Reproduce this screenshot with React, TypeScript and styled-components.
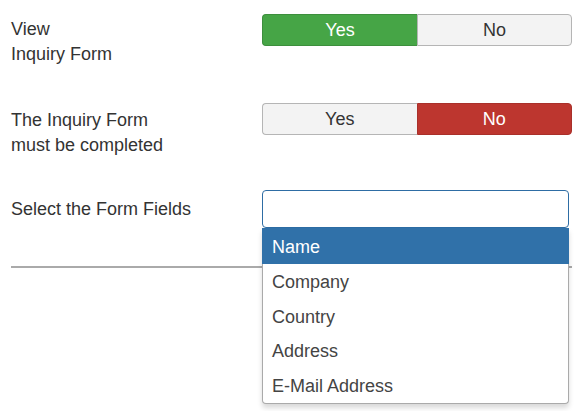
import React from "react";
import styled, { createGlobalStyle } from "styled-components";

const Global = createGlobalStyle`
  html, body { margin: 0; padding: 0; background: #fff; }
  body {
    font-family: "Liberation Sans", Arial, sans-serif;
    font-size: 18px;
    line-height: 25px;
    color: #333;
  }
`;

const Page = styled.div`
  position: relative;
  box-sizing: border-box;
  min-height: 411px;
  padding: 14px 0 0 11px;
  width: 587px;
`;

const Row = styled.div<{ $h: number }>`
  display: grid;
  grid-template-columns: 251px 310px;
  height: ${(p) => p.$h}px;
  align-items: start;
`;

const Label = styled.div<{ $top: number }>`
  padding-top: ${(p) => p.$top}px;
  color: #333;
`;

const Toggle = styled.div`
  display: flex;
  height: 32px;
  width: 310px;
`;

const ToggleBtn = styled.div<{ $active?: "yes" | "no"; $side: "l" | "r" }>`
  flex: 1 1 0;
  display: flex;
  align-items: center;
  justify-content: center;
  box-sizing: border-box;
  border: 1px solid #b5b5b5;
  ${(p) => (p.$side === "l" ? "border-right: none; border-radius: 4px 0 0 4px;" : "border-radius: 0 4px 4px 0;")}
  background: #f3f3f3;
  color: #333;
  ${(p) =>
    p.$active === "yes" &&
    `background: #46a546; border-color: #3d8f3d; color: #fff; flex-basis: 2px;`}
  ${(p) =>
    p.$active === "no" &&
    `background: #bd362f; border-color: #a9302a; color: #fff; flex-basis: 2px;`}
`;

const Input = styled.div`
  box-sizing: border-box;
  width: 307px;
  height: 38px;
  border: 1px solid #2e6da4;
  border-radius: 4px;
  background: #fff;
`;

const Rule = styled.div`
  height: 2px;
  background: #aaa;
  width: 561px;
`;

const Dropdown = styled.ul`
  position: absolute;
  z-index: 2;
  left: 262px;
  top: 228px;
  width: 307px;
  box-sizing: border-box;
  margin: 0;
  padding: 0;
  list-style: none;
  background: #fff;
  border: 1px solid #aaa;
  border-top: none;
  border-radius: 0 0 4px 4px;
  box-shadow: 0 4px 5px rgba(0, 0, 0, 0.15);
`;

const Item = styled.li<{ $hl?: boolean }>`
  box-sizing: border-box;
  height: ${(p) => (p.$hl ? 36 : 34.75)}px;
  display: flex;
  align-items: center;
  padding: 2px 0 0 ${(p) => (p.$hl ? 10 : 9)}px;
  color: ${(p) => (p.$hl ? "#fff" : "#444")};
  background: ${(p) => (p.$hl ? "#3071a9" : "transparent")};
  margin: ${(p) => (p.$hl ? "0 -1px" : "0")};
`;

const fields = ["Name", "Company", "Country", "Address", "E-Mail Address"];

export default function App() {
  return (
    <>
      <Global />
      <Page>
        <Row $h={89}>
          <Label $top={3}>
            View
            <br />
            Inquiry Form
          </Label>
          <Toggle>
            <ToggleBtn $side="l" $active="yes">Yes</ToggleBtn>
            <ToggleBtn $side="r">No</ToggleBtn>
          </Toggle>
        </Row>
        <Row $h={87}>
          <Label $top={5}>
            The Inquiry Form
            <br />
            must be completed
          </Label>
          <Toggle>
            <ToggleBtn $side="l">Yes</ToggleBtn>
            <ToggleBtn $side="r" $active="no">No</ToggleBtn>
          </Toggle>
        </Row>
        <Row $h={76}>
          <Label $top={7}>Select the Form Fields</Label>
          <Input />
        </Row>
        <Rule />
        <Dropdown>
          {fields.map((f, i) => (
            <Item key={f} $hl={i === 0}>
              {f}
            </Item>
          ))}
        </Dropdown>
      </Page>
    </>
  );
}
